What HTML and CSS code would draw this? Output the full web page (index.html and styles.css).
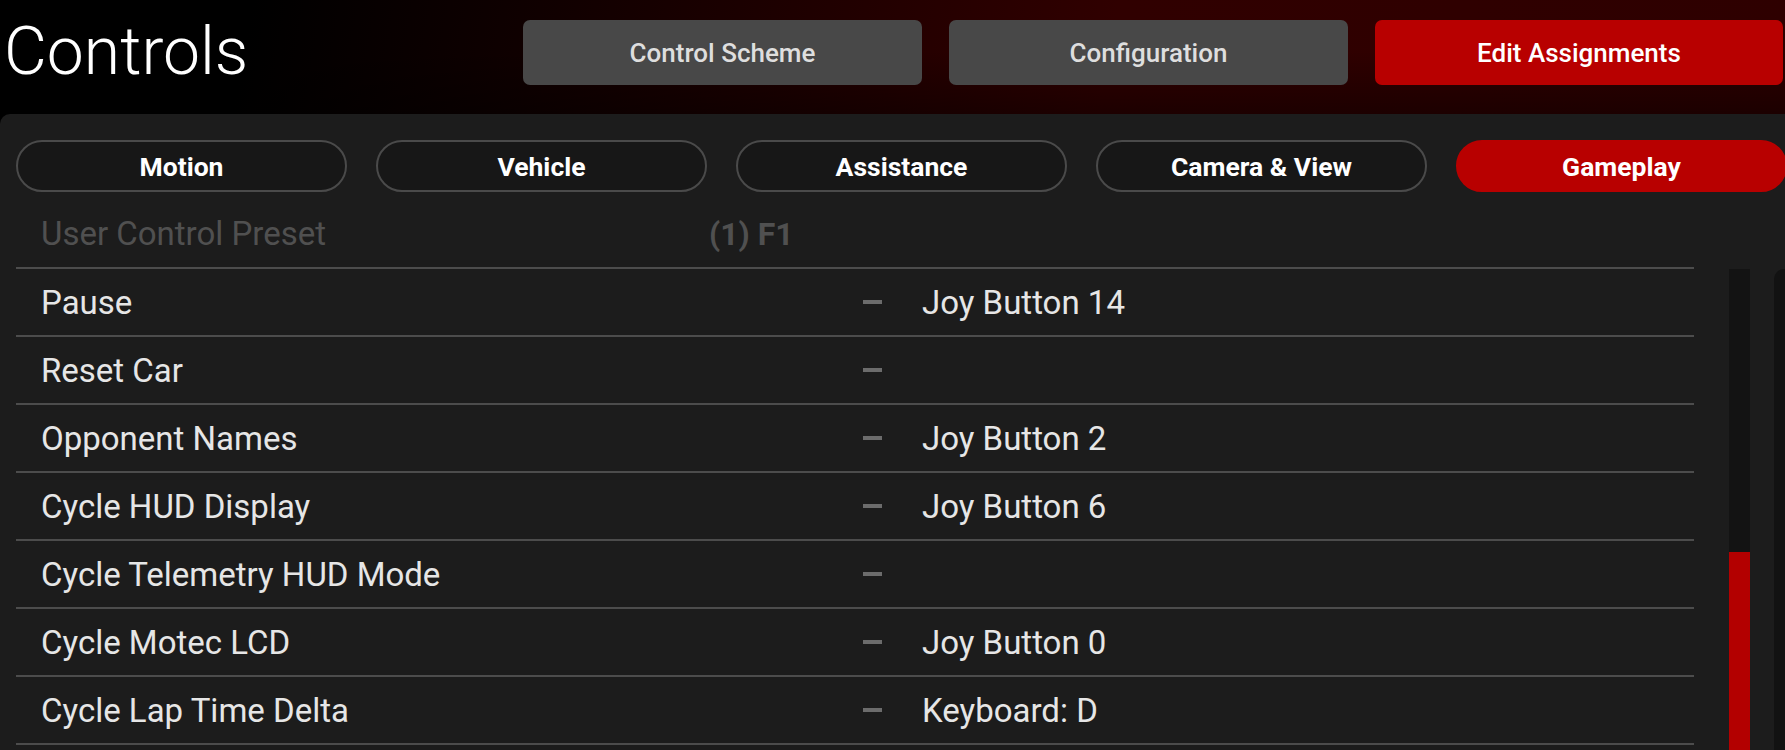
FILE: index.html
```html
<!DOCTYPE html>
<html lang="en">
<head>
  <meta charset="UTF-8">
  <title>Controls</title>
  <link rel="stylesheet" href="styles.css">
</head>
<body>

  <header class="top">
    <h1 class="title">Controls</h1>
    <nav class="top-buttons">
      <button class="top-btn">Control Scheme</button>
      <button class="top-btn">Configuration</button>
      <button class="top-btn active">Edit Assignments</button>
    </nav>
  </header>

  <main class="panel">
    <div class="tabs">
      <button class="tab">Motion</button>
      <button class="tab">Vehicle</button>
      <button class="tab">Assistance</button>
      <button class="tab">Camera &amp; View</button>
      <button class="tab active">Gameplay</button>
    </div>

    <div class="preset-row">
      <span class="preset-label">User Control Preset</span>
      <span class="preset-value">(1) F1</span>
    </div>

    <div class="scroll-area">
      <div class="rows">
        <div class="row">
          <span class="row-label">Pause</span>
          <span class="dash"></span>
          <span class="row-value">Joy Button 14</span>
        </div>
        <div class="row">
          <span class="row-label">Reset Car</span>
          <span class="dash"></span>
          <span class="row-value"></span>
        </div>
        <div class="row">
          <span class="row-label">Opponent Names</span>
          <span class="dash"></span>
          <span class="row-value">Joy Button 2</span>
        </div>
        <div class="row">
          <span class="row-label">Cycle HUD Display</span>
          <span class="dash"></span>
          <span class="row-value">Joy Button 6</span>
        </div>
        <div class="row">
          <span class="row-label">Cycle Telemetry HUD Mode</span>
          <span class="dash"></span>
          <span class="row-value"></span>
        </div>
        <div class="row">
          <span class="row-label">Cycle Motec LCD</span>
          <span class="dash"></span>
          <span class="row-value">Joy Button 0</span>
        </div>
        <div class="row">
          <span class="row-label">Cycle Lap Time Delta</span>
          <span class="dash"></span>
          <span class="row-value">Keyboard: D</span>
        </div>
      </div>

      <div class="scrollbar">
        <div class="scroll-thumb"></div>
      </div>
      <div class="side-edge"></div>
    </div>
  </main>

</body>
</html>
```

FILE: styles.css
```css
html, body{
    margin: 0;
    padding: 0;
}

body{
    width: 1785px;
    height: 750px;
    overflow: hidden;
    background: #000;
    font-family: Roboto, "Liberation Sans", sans-serif;
    color: #e4e4e4;
}

button{
    font-family: inherit;
    cursor: pointer;
}

/* header */
.top{
    height: 114px;
    display: flex;
    align-items: flex-start;
    background:
        linear-gradient(to bottom, rgba(0,0,0,0) 45%, rgba(0,0,0,0.4) 100%),
        linear-gradient(100deg, #000 14%, #1a0000 40%, #300000 62%, #2e0000 100%);
}

.title{
    margin: 0;
    padding: 12px 0 0 4px;
    font-size: 66px;
    font-weight: 300;
    line-height: 80px;
    color: #fff;
}

.top-buttons{
    margin-left: auto;
    padding: 20px 2px 0 0;
    display: flex;
    gap: 27px;
}

.top-btn{
    width: 399px;
    height: 65px;
    border: none;
    border-radius: 7px;
    background: #484848;
    color: #dedede;
    font-size: 26px;
    font-weight: 500;
}

.top-btn.active{
    width: 408px;
    background: #b80000;
    color: #fff;
}

/* panel */
.panel{
    height: 636px;
    background: #1c1c1c;
    border-top-left-radius: 10px;
    overflow: hidden;
}

.tabs{
    display: grid;
    grid-template-columns: repeat(5, 331px);
    gap: 29px;
    padding: 26px 0 0 16px;
}

.tab{
    height: 52px;
    border: 2px solid #4a4a4a;
    border-radius: 26px;
    background: #171717;
    color: #fff;
    font-size: 26.5px;
    font-weight: 700;
}

.tab.active{
    border-color: #b80000;
    background: #b80000;
}

.preset-row{
    width: 1678px;
    height: 77px;
    margin-left: 16px;
    display: flex;
    align-items: center;
    padding-top: 8px;
    box-sizing: border-box;
    border-bottom: 2px solid #4c4c4c;
    font-size: 33px;
    color: #505050;
}

.preset-label{
    width: 668px;
    padding-left: 25px;
}

.preset-value{
    font-weight: 700;
    font-size: 32px;
}

.scroll-area{
    display: flex;
    height: 481px;
}

.rows{
    width: 1678px;
    margin-left: 16px;
}

.row{
    height: 66px;
    display: flex;
    align-items: center;
    border-bottom: 2px solid #4c4c4c;
    font-size: 33px;
}

.row-label{
    width: 822px;
    padding-left: 25px;
    color: #e6e6e6;
}

.dash{
    width: 19px;
    height: 4px;
    background: #6c6c6c;
    margin-right: 40px;
}

.row-value{
    color: #e6e6e6;
}

.scrollbar{
    width: 21px;
    margin-left: 35px;
    display: flex;
    flex-direction: column;
    justify-content: flex-end;
    background: #131313;
}

.scroll-thumb{
    height: 198px;
    background: #b30000;
}

.side-edge{
    flex: 1;
    margin-left: 24px;
    background: #121212;
    border-top-left-radius: 10px;
}
```
